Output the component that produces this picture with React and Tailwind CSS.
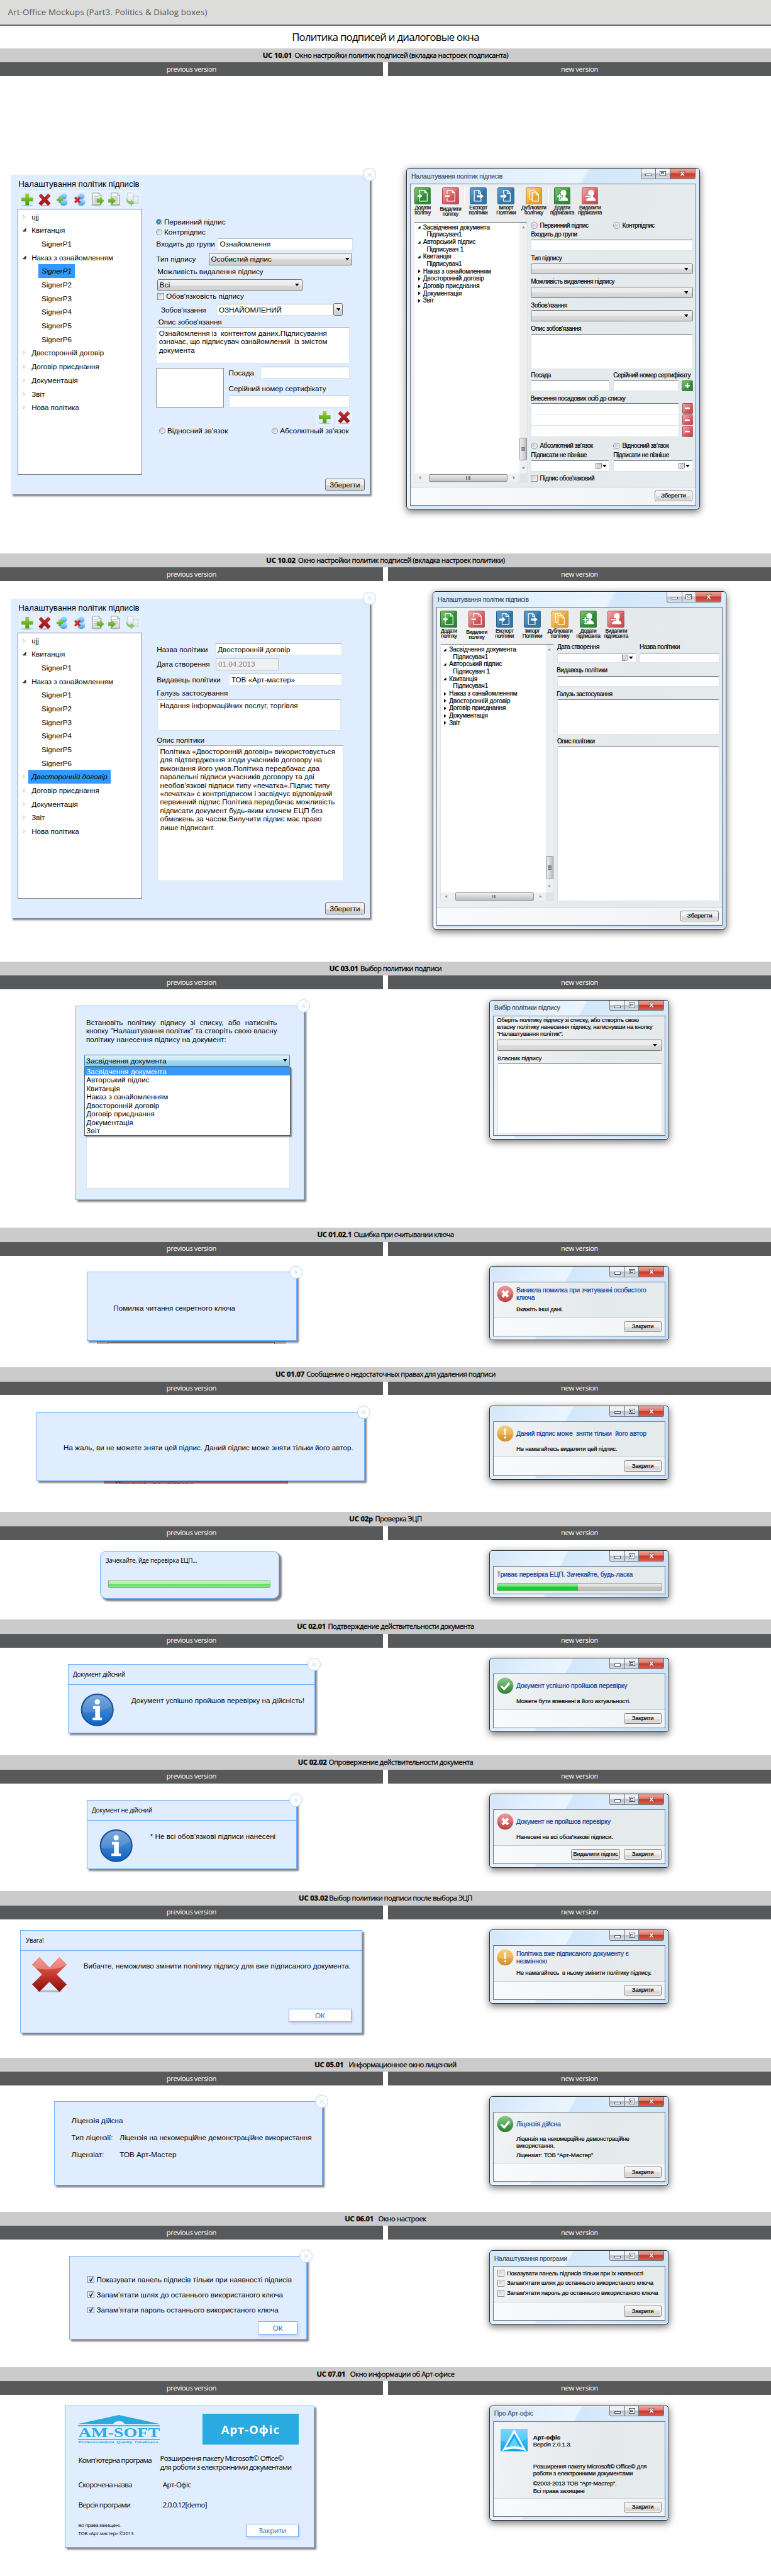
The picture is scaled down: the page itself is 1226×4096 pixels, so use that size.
import React, { useLayoutEffect, useRef, useState } from "react";

/* Single line of text whose tracking is adjusted so that it spans `w` pixels. */
function T({ w, className = "", children }) {
  const ref = useRef(null);
  const [ls, setLs] = useState(0);
  useLayoutEffect(() => {
    const el = ref.current;
    if (!w || !el) return;
    const n = el.textContent.length;
    setLs((w - el.offsetWidth) / n);
  }, [w]);
  return (
    <div className={`whitespace-pre ${className}`}>
      <span ref={ref} className="inline-block" style={{ letterSpacing: `${ls}px` }}>
        {children}
      </span>
    </div>
  );
}

const OPEN = "font-['Open_Sans','Noto_Sans',sans-serif]";

/* ---------- shared gradients ---------- */
function Defs() {
  const g = (id, a, b) => (
    <linearGradient id={id} x1="0" y1="0" x2="0" y2="1">
      <stop offset="0" stopColor={a} />
      <stop offset="1" stopColor={b} />
    </linearGradient>
  );
  return (
    <svg className="absolute h-0 w-0">
      <defs>
        {g("gGreen", "#a5d62a", "#3f9a1c")}
        {g("gRed", "#c9302c", "#8e1512")}
        {g("gBlue", "#b6e2fb", "#3f9fe6")}
        {g("gDoc", "#ffffff", "#d9dedb")}
        {g("gInfo", "#6c9fd6", "#0a62c4")}
        {g("gCross", "#ff6a5e", "#8a0b04")}
        {g("gOk", "#8cc98a", "#2c8a35")}
        {g("gErr", "#ee9a9c", "#c9444c")}
        {g("gWarn", "#f8cf7d", "#e79a2b")}
        {g("gCyan", "#4fd0fb", "#12a4ef")}
      </defs>
    </svg>
  );
}

/* ---------- previous version: toolbar icons ---------- */
const Plus = () => (
  <>
    <ellipse cx="16" cy="29" rx="13" ry="1.500" fill="#9fb3a0" opacity=".7" />
    <path d="M12.500 3h8v9h8.500v8h-8.500v8h-8v-8H4v-8h8.500z" fill="url(#gGreen)" />
  </>
);
const Cross = () => (
  <>
    <ellipse cx="16" cy="29" rx="12" ry="1.500" fill="#b3a0a8" opacity=".7" />
    <path d="M8.500 3L16 11l7.500-8 5.500 5-7.500 8 7.500 8-6 5-7-7.500L9 29l-6-5 7.500-8L3.500 8z" fill="url(#gRed)" />
  </>
);
const Person = () => (
  <>
    <path d="M12 24c0-6 4-9 9-9s6 4 6 8-4 6-8 6-7-1-7-5z" fill="url(#gBlue)" />
    <ellipse cx="13.500" cy="12" rx="5.500" ry="5" fill="url(#gBlue)" />
    <circle cx="19.500" cy="9" r="6.500" fill="url(#gBlue)" />
  </>
);
const Doc = ({ x = 7 }) => (
  <g transform={`translate(${x} 0)`}>
    <ellipse cx="8" cy="28" rx="11" ry="1.500" fill="#98a39a" opacity=".7" />
    <path d="M0 2h13l5 5v20H0z" fill="url(#gDoc)" stroke="#8d968f" strokeWidth="1.200" />
    <path d="M13 2v5h5" fill="none" stroke="#8d968f" />
    <path d="M3 9h9M3 13h12M3 17h12M3 21h8" stroke="#b9c0bb" strokeWidth="1.500" />
  </g>
);
const GArrow = ({ x }) => (
  <path transform={`translate(${x} 0)`} d="M0 15h7v-4l8 7.500-8 7.500v-4H0z" fill="url(#gGreen)" stroke="#4a8f22" strokeWidth=".6" />
);
const OLD_ICONS = [
  <Plus />,
  <Cross />,
  <>
    <Person />
    <path d="M8.500 10h4.500v4h4.500v4.500H13v4H8.500v-4H4V14h4.500z" fill="url(#gGreen)" />
  </>,
  <>
    <Person />
    <path d="M7 10l4 3.500 4-3.500 3 3-3.500 4 3.500 4-3 3-4-3.500-4 3.500-3-3 3.500-4L4 13z" fill="#e3242b" />
  </>,
  <>
    <Doc x={6} />
    <GArrow x={15} />
  </>,
  <>
    <Doc x={8} />
    <GArrow x={2} />
  </>,
  <g opacity=".65">
    <path d="M5 2h12v18H5zM17 9h11v15H17z" fill="url(#gDoc)" stroke="#a8b0aa" />
    <path d="M3 11c0 6 4 9 9 9v-4l8 7-8 7v-4C6 26 1 20 3 11z" fill="#5fa82c" />
  </g>,
];
function IconBtn({ children }) {
  return (
    <div className="h-[32px] w-[31px] rounded-[3px] border-2 border-[#f2f7ff] bg-[#e3eefe]">
      <svg viewBox="0 0 32 32" className="h-full w-full">
        {children}
      </svg>
    </div>
  );
}

/* ---------- previous version: controls ---------- */
const FIELD = "border border-[#dbe3ea] border-t-[#aeb4bb] bg-white flex items-center";
const SELECT =
  "flex items-center rounded-[3px] border border-[#707070] bg-[linear-gradient(#f2f2f2_0%,#ebebeb_50%,#dadada_51%,#cfcfcf_100%)]";
const Caret = ({ className = "" }) => (
  <svg viewBox="0 0 8 5" className={`h-[5px] w-[8px] shrink-0 ${className}`}>
    <path d="M0 0h8L4 5z" fill="#000" />
  </svg>
);
function Radio({ on, big }) {
  return (
    <span
      className={`flex shrink-0 items-center justify-center rounded-full border border-[#8e8f8f] bg-[#f4f4f4] ${
        big ? "h-[13px] w-[13px]" : "h-[12px] w-[12px]"
      }`}
    >
      <span className={`h-[8px] w-[8px] rounded-full ${on ? "bg-[radial-gradient(#5fd0f8_10%,#0c4a72_80%)]" : "bg-[linear-gradient(135deg,#b9bfc5,#f4f5f6)]"}`} />
    </span>
  );
}
function Check({ on }) {
  return (
    <span className="flex h-[13px] w-[13px] shrink-0 items-center justify-center border border-[#8e8f8f] bg-[#f4f4f4]">
      <span className="flex h-[9px] w-[9px] bg-[linear-gradient(135deg,#c6cbd0,#f6f6f6)]">
        {on && (
          <svg viewBox="0 0 9 9" className="h-full w-full">
            <path d="M1.500 4.500L4 8l3.500-7.500" fill="none" stroke="#2b2f8f" strokeWidth="1.800" />
          </svg>
        )}
      </span>
    </span>
  );
}
function CloseDot() {
  return (
    <div className="absolute -right-[12px] -top-[13px] flex h-[25px] w-[25px] items-center justify-center rounded-full border border-[#a9cffb] bg-white">
      <svg viewBox="0 0 10 10" className="h-[9px] w-[9px]">
        <path d="M1 1l8 8M9 1L1 9" stroke="#a9cffb" strokeWidth="1.300" />
      </svg>
    </div>
  );
}
function Old({ className = "", close = true, children }) {
  return (
    <div className={`relative border border-[#71b0fb] bg-[#e0edff] text-[14px] shadow-[4px_4px_3px_rgba(60,60,70,0.65)] ${className}`}>
      {children}
      {close && <CloseDot />}
    </div>
  );
}
function OldTree({ rows }) {
  return (
    <div className="h-[507px] w-[238px] border border-[#7f8794] bg-white pt-px">
      {rows.map(([kind, text, w, sel], i) => (
        <div key={i} className="flex h-[26px] items-center">
          <svg viewBox="0 0 8 10" className="ml-[9px] h-[9px] w-[7px] shrink-0">
            {kind === "c" && <path d="M1 1l5 4-5 4z" fill="#fff" stroke="#b0b3b8" strokeWidth="1" />}
            {kind === "o" && <path d="M7 1v7H0z" fill="#444" stroke="#222" strokeWidth=".8" />}
          </svg>
          <div
            className={`flex h-[26px] items-center ${kind === "s" ? "ml-[23px]" : "ml-[4px]"} ${
              sel ? "bg-[#3399ff] px-[6px] italic" : "px-[6px]"
            }`}
          >
            <T w={w}>{text}</T>
          </div>
        </div>
      ))}
    </div>
  );
}
const oldRows = (sel) => [
  ["c", "ujj", 14],
  ["o", "Квитанція", 64],
  ["s", "SignerP1", 57],
  ["o", "Наказ з ознайомленням", 156],
  ["s", "SignerP1", 57, sel === 4],
  ["s", "SignerP2", 57],
  ["s", "SignerP3", 57],
  ["s", "SignerP4", 57],
  ["s", "SignerP5", 57],
  ["s", "SignerP6", 57],
  ["c", "Двосторонній договір", sel === 10 ? 145 : 138, sel === 10],
  ["c", "Договір приєднання", 129],
  ["c", "Документація", 88],
  ["c", "Звіт", 25],
  ["c", "Нова політика", 91],
];
function OldPolicy({ sel, className, children }) {
  return (
    <div className={`relative flex h-[610px] w-[685px] bg-[#e0edff] text-[14px] shadow-[4px_4px_3px_rgba(60,60,70,0.65)] ${className}`}>
      <div className="ml-[13px] w-[238px]">
        <T w={231} className="ml-[2px] mt-[9px] h-[20px] text-[16px] leading-[20px]">
          Налаштування політик підписів
        </T>
        <div className="ml-[3px] mt-[2px] flex h-[34px] w-[232px] justify-between">
          {OLD_ICONS.map((ic, i) => (
            <IconBtn key={i}>{ic}</IconBtn>
          ))}
        </div>
        <OldTree rows={oldRows(sel)} />
      </div>
      <div className="ml-[26px] flex w-[398px] flex-col">
        {children}
        <div className={`mb-[8px] mt-auto h-[22px] w-[75px] justify-center self-end ${SELECT}`}>
          <T w={58}>Зберегти</T>
        </div>
      </div>
      <CloseDot />
    </div>
  );
}

/* ---------- new version: window frame ---------- */
function Win({ className = "", title, tw, children }) {
  return (
    <div
      className={`flex flex-col rounded-[6px] border border-[#262b30] bg-[linear-gradient(118deg,#d3e5f9_0%,#e3f1ff_22%,#eaf5ff_38%,#d2e7fb_39%,#dcedfc_60%,#c4ddf7_100%)] shadow-[0_4px_14px_rgba(0,0,0,0.55),inset_0_0_0_1px_rgba(255,255,255,0.8)] [-webkit-text-stroke:0.25px] ${className}`}
    >
      <div className="flex h-[29px] shrink-0 items-start">
        {title && (
          <T w={tw} className="ml-[8px] mt-[7px] h-[16px] text-[12.500px] leading-[16px] text-[#44525e]">
            {title}
          </T>
        )}
        <div className="ml-auto mr-[8px] flex h-[20px] overflow-hidden rounded-b-[4px] border border-t-0 border-[#6a7480]">
          <div className="flex w-[28px] items-end justify-center border-r border-[#6a7480] bg-[linear-gradient(#eef2f7_45%,#b9c1cb_50%,#d9dfe8)] pb-[4px]">
            <span className="h-[5px] w-[12px] border border-[#55606b] bg-white" />
          </div>
          <div className="flex w-[27px] items-center justify-center border-r border-[#6a7480] bg-[linear-gradient(#eef2f7_45%,#b9c1cb_50%,#d9dfe8)]">
            <span className="flex h-[10px] w-[12px] items-center justify-center border border-[#55606b] bg-white">
              <span className="h-[4px] w-[6px] border border-[#55606b]" />
            </span>
          </div>
          <div className="flex w-[47px] items-center justify-center bg-[linear-gradient(#eba89b_0%,#dd7767_45%,#c8362a_50%,#d9604e_100%)]">
            <svg viewBox="0 0 12 10" className="h-[10px] w-[12px]">
              <path d="M1 .5h3L6 3 8 .5h3L7.800 5 11 9.500H8L6 7 4 9.500H1L4.200 5z" fill="#fff" stroke="#5a3a3a" strokeWidth=".8" />
            </svg>
          </div>
        </div>
      </div>
      <div className="mx-[6px] mb-[6px] flex flex-1 flex-col border border-[#6d7680] bg-[linear-gradient(100deg,#f1f3f5_0%,#e4e9ec_60%,#e6ebed_100%)]">
        {children}
      </div>
    </div>
  );
}
const BTN =
  "flex h-[21px] items-center justify-center rounded-[3px] border border-[#7a7a7a] bg-[linear-gradient(#f4f4f4_0%,#ededed_50%,#dddddd_51%,#d4d4d4_100%)] text-[11.500px] shadow-[inset_0_0_0_1px_#fafafa]";
function Footer({ children }) {
  return (
    <div className="mt-auto flex h-[35px] shrink-0 justify-end gap-[7px] border-t border-[#c6cbd0] bg-[linear-gradient(100deg,#f9fafb,#f1f3f5)] pr-[6px] pt-[6px]">
      {children}
    </div>
  );
}
const CloseBtn = () => (
  <div className={`w-[72px] ${BTN}`}>
    <T w={42}>Закрити</T>
  </div>
);

/* ---------- new version: toolbar ---------- */
const TILE = {
  green: "bg-[linear-gradient(135deg,#7cc06f_0%,#4aa54a_45%,#2f8f38_50%,#33803a_100%)]",
  red: "bg-[linear-gradient(135deg,#eda5a6_0%,#dc6e72_50%,#d25a60_52%,#c04b52_100%)]",
  blue: "bg-[linear-gradient(135deg,#5a9fce_0%,#3c82b8_50%,#32709f_52%,#3a7aa5_100%)]",
  orange: "bg-[linear-gradient(135deg,#f7cf86_0%,#efb040_50%,#e9a32f_52%,#e09a2e_100%)]",
};
const S = { fill: "none", stroke: "#fff", strokeWidth: 1.6 };
const GLYPH = {
  add: (
    <>
      <path d="M9 11V5h11l5 5v17H9v-6M20 5v5h5" {...S} />
      <path d="M5 16.500h9M9.500 12v9" stroke="#fff" strokeWidth="3" />
    </>
  ),
  del: (
    <>
      <path d="M9 12V5h11l5 5v17H9v-6M20 5v5h5" {...S} />
      <path d="M5 16.500h9" stroke="#fff" strokeWidth="3" />
    </>
  ),
  exp: (
    <>
      <path d="M22 11l-4-6H8v22h14v-5M17 5v6h5" {...S} />
      <path d="M14 15h6v-4l7 6-7 6v-4h-6z" fill="#fff" />
    </>
  ),
  imp: (
    <>
      <path d="M11 11V5h9l5 5v17H11v-5M19 5v6h6" {...S} />
      <path d="M5 15h6v-4l7 6-7 6v-4H5z" fill="#fff" />
    </>
  ),
  dup: (
    <>
      <path d="M12 9h9l4 4v14H12zM20 9v5h5" {...S} />
      <path d="M12 23H7V5h10l3 4" {...S} />
    </>
  ),
  user: (
    <path d="M18.500 4c4 0 5.500 3 5.500 6.500s-1.500 5-2.500 6.500c0 3 6 3 6 7.500 0 1.500-1 2-2 2H10c-1.500 0-2-.5-2-2 0-3 6-4 6-7-1-1.500-2-3.500-2-7S14.500 4 18.500 4z" fill="#fff" />
  ),
};
const NEW_TOOLS = (swap) => [
  ["green", "add", ["Додати", 31], ["політку", 31]],
  ["red", "del", ["Видалити", 40], ["політку", 30]],
  ["blue", swap ? "imp" : "exp", ["Експорт", 34], ["політики", 36]],
  ["blue", swap ? "exp" : "imp", ["Імпорт", 28], ["ПолІтики", 37]],
  ["orange", "dup", ["Дублювати", 47], ["політику", 35]],
  ["green", "uadd", ["Додати", 31], ["підписанта", 46]],
  ["red", "udel", ["Видалити", 41], ["підписанта", 46]],
];
function NewToolbar({ swap, className }) {
  return (
    <div className={`-ml-[4px] flex pt-[6px] ${className}`}>
      {NEW_TOOLS(swap).map(([color, g, a, b], i) => (
        <div key={i} className={`relative flex w-[53px] flex-col items-center ${i === 5 ? "ml-px" : ""}`}>
          {!swap && (i === 2 || i === 5) && <span className="absolute left-0 top-0 h-[32px] w-px bg-white" />}
          <div className={`h-[32px] w-[32px] rounded-[3px] border border-black/20 ${TILE[color]}`}>
            <svg viewBox="0 0 32 32" className="h-full w-full">
              {g[0] === "u" ? (
                <>
                  {GLYPH.user}
                  <path
                    d={g === "uadd" ? "M8 11h4v4h4v4h-4v4H8v-4H4v-4h4z" : "M5 15h11v4H5z"}
                    fill="#fff"
                    stroke={g === "uadd" ? "#3a9a42" : "#d2595f"}
                    strokeWidth="1.300"
                  />
                </>
              ) : (
                GLYPH[g]
              )}
            </svg>
          </div>
          <div className={`flex flex-col items-center text-[10px] leading-[9.500px] ${i === 1 ? "mt-[5px]" : "mt-[3px]"}`}>
            <T w={a[1]}>{a[0]}</T>
            <T w={b[1]}>{b[0]}</T>
          </div>
        </div>
      ))}
    </div>
  );
}

const NEW_ROWS = [
  ["o", "Засвідчення документа", 127],
  ["s", "Підписувач1", 67],
  ["o", "Авторський підпис", 100],
  ["s", "Підписувач 1", 70],
  ["o", "Квитанція", 54],
  ["s", "Підписувач1", 67],
  ["c", "Наказ з ознайомленням", 130],
  ["c", "Двосторонній договір", 116],
  ["c", "Договір приєднання", 108],
  ["c", "Документація", 74],
  ["c", "Звіт", 21],
];
const Tri = ({ d }) => (
  <svg viewBox="0 0 6 6" className="h-[6px] w-[6px]">
    <path d={d} fill="#8f959b" />
  </svg>
);
function NewTree({ className }) {
  return (
    <div className={`flex w-[217px] rounded-[2px] border border-[#dfe4ea] border-t-[#7b8288] ${className}`}>
      <div className="flex flex-1 flex-col">
        <div className="flex-1 bg-white pt-[2px] text-[12px]">
          {NEW_ROWS.map(([k, t, w], i) => (
            <div key={i} className="flex h-[14px] items-center">
              <svg viewBox="0 0 7 8" className="ml-[5px] mr-[5px] h-[8px] w-[6px] shrink-0">
                {k === "o" && <path d="M6.500 1v6H0z" />}
                {k === "c" && <path d="M1.500 0l5 4-5 4z" />}
              </svg>
              <T w={w} className={`leading-[14px] ${k === "s" ? "ml-[7px]" : ""}`}>
                {t}
              </T>
            </div>
          ))}
        </div>
        <div className="flex h-[16px] items-center bg-[#eeeff1] pl-[7px] pr-[7px]">
          <Tri d="M5 0v6L1 3z" />
          <div className="ml-[14px] flex h-[15px] w-[150px] items-center justify-center gap-[1px] rounded-[2px] border border-[#8d9298] bg-[linear-gradient(#ededee,#d5d6d9_50%,#bcbdc2)]">
            <span className="h-[7px] w-[2px] bg-[#777]" />
            <span className="h-[7px] w-[2px] bg-[#777]" />
            <span className="h-[7px] w-[2px] bg-[#777]" />
          </div>
          <div className="ml-auto">
            <Tri d="M1 0v6l4-3z" />
          </div>
        </div>
      </div>
      <div className="flex w-[15px] flex-col items-center bg-[#eeeff1] pt-[6px]">
        <Tri d="M0 5h6L3 1z" />
        <div className="mt-auto flex h-[44px] w-full flex-col items-center justify-center gap-[1px] rounded-[2px] border border-[#8d9298] bg-[linear-gradient(90deg,#ededee,#d5d6d9_50%,#bcbdc2)]">
          <span className="h-[2px] w-[7px] bg-[#777]" />
          <span className="h-[2px] w-[7px] bg-[#777]" />
          <span className="h-[2px] w-[7px] bg-[#777]" />
        </div>
        <div className="mb-[8px] mt-[11px]">
          <Tri d="M0 1h6L3 5z" />
        </div>
        <div className="h-[16px] w-full bg-[#dfe3e7]" />
      </div>
    </div>
  );
}
const NF = "rounded-[2px] border border-[#d9e1ea] border-t-[#6f757b] bg-white";
const NSel = ({ className = "w-[309px]" }) => (
  <div className={`flex h-[21px] items-center justify-end rounded-[3px] border border-[#707070] bg-[linear-gradient(#f0f0f0_0%,#ebebeb_50%,#dddddd_51%,#d3d3d3_100%)] pr-[8px] ${className}`}>
    <Caret />
  </div>
);
const NL = ({ w, className = "", children }) => (
  <T w={w} className={`h-[16px] leading-[16px] ${className}`}>
    {children}
  </T>
);
const DateField = ({ className }) => (
  <div className={`flex items-center justify-end ${NF} ${className}`}>
    <svg viewBox="0 0 12 12" className="h-[12px] w-[12px]">
      <path d="M.5.5h11v8l-3 3h-8z" fill="#eef0f2" stroke="#555" />
      <path d="M2 3h8M2 5h8M2 7h8M2 9h6M4 2v8M6 2v8M8 2v8" stroke="#b8bdc2" strokeWidth=".6" />
    </svg>
    <Caret className="ml-px mr-[5px]" />
  </div>
);
const MiniBtn = ({ plus }) => (
  <div className={`flex h-[21px] w-[21px] items-center justify-center rounded-[2px] border border-black/20 ${plus ? TILE.green : TILE.red}`}>
    <svg viewBox="0 0 10 10" className="h-[10px] w-[10px]">
      <path d={plus ? "M5 0v10M0 5h10" : "M0 5h10"} stroke="#fff" strokeWidth="3" />
    </svg>
  </div>
);

/* ---------- status icons ---------- */
function Status({ kind }) {
  const fill = { ok: "url(#gOk)", err: "url(#gErr)", warn: "url(#gWarn)" }[kind];
  return (
    <svg viewBox="0 0 32 32" className="h-[32px] w-[32px] shrink-0">
      <circle cx="16" cy="16" r="15.500" fill={fill} />
      <path d="M0.500 16a15.500 15.500 0 0 0 31 0c-8 4-22 4-31 0z" fill="#000" opacity=".07" />
      {kind === "ok" && <path d="M8.500 16.500l5.500 6L24 11" fill="none" stroke="#fff" strokeWidth="4" />}
      {kind === "err" && <path d="M10.500 10.500l11 11M21.500 10.500l-11 11" stroke="#fff" strokeWidth="5" />}
      {kind === "warn" && <path d="M14 6.500h4l-.6 13h-2.800zM14 22h4v3.500h-4z" fill="#fff" />}
    </svg>
  );
}
function Msg({ kind, lines, body, className = "h-[141px]", buttons }) {
  return (
    <Win className={`w-[343px] ${className}`}>
      <div className="flex px-[6px] pt-[6px]">
        <Status kind={kind} />
        <div className="ml-[5px]">
          <div className="flex h-[33px] flex-col justify-center text-[12.500px] leading-[14px] text-[#0a3a9c]">
            {lines.map(([t, w]) => (
              <T key={t} w={w}>
                {t}
              </T>
            ))}
          </div>
          <div className="mt-[6px] text-[11.500px] leading-[13px]">
            {body.map(([t, w, c]) => (
              <T key={t} w={w} className={c || ""}>
                {t}
              </T>
            ))}
          </div>
        </div>
      </div>
      <Footer>{buttons || <CloseBtn />}</Footer>
    </Win>
  );
}
const Info = () => (
  <svg viewBox="0 0 64 64" className="h-[64px] w-[64px] shrink-0">
    <circle cx="32" cy="32" r="30" fill="url(#gInfo)" stroke="#1b4f96" strokeWidth="2.500" />
    <path d="M4 36C12 38 40 38 59 24 54 0 10-4 4 30z" fill="#fff" opacity=".12" />
    <circle cx="32" cy="17" r="5" fill="#fff" />
    <path d="M24 25h13v22h4v5H23v-5h5V30h-4z" fill="#fff" />
  </svg>
);
const OkBtn = ({ className, w, children }) => (
  <div className={`flex items-center justify-center border-2 border-[#71aefc] bg-white text-[14px] text-[#2f6fae] shadow-[2px_3px_5px_rgba(110,140,180,0.35)] ${className}`}>
    <T w={w}>{children}</T>
  </div>
);

/* ---------- section scaffold ---------- */
function Section({ code, cw, name, nw, gap = "gap-[4px]", className, prev, next }) {
  return (
    <section className={className}>
      <div className={`flex h-[27px] items-center justify-center bg-[#cbcbcb] text-[13.500px] [-webkit-text-stroke:0.3px] ${gap} ${OPEN}`}>
        <T w={cw} className="font-bold">
          {code}
        </T>
        <T w={nw}>{name}</T>
      </div>
      <div className={`flex h-[26px] gap-[10px] text-[13.500px] text-white ${OPEN}`}>
        <div className="flex flex-1 items-center justify-center bg-[#58595b]">
          <T w={95}>previous version</T>
        </div>
        <div className="flex flex-1 items-center justify-center bg-[#58595b]">
          <T w={71}>new version</T>
        </div>
      </div>
      <div className="flex">
        <div className="flex w-[735px] flex-col items-start">{prev}</div>
        <div className="flex w-[735px] flex-col items-start">{next}</div>
      </div>
    </section>
  );
}

/* ---------- dialogs ---------- */
function OldSigner() {
  return (
    <OldPolicy sel={4} className="ml-[20px] mt-[188px]">
      <div className="mt-[80px] flex h-[20px] items-center gap-[4px]">
        <Radio on />
        <T w={117}>Первинний підпис</T>
      </div>
      <div className="flex h-[18px] items-center gap-[4px]">
        <Radio />
        <T w={79}>Контрпідпис</T>
      </div>
      <div className="mt-[3px] flex h-[23px] items-center">
        <T w={112} className="ml-px w-[116px]">
          Входить до групи
        </T>
        <div className={`h-[23px] w-[259px] pl-[4px] ${FIELD}`}>
          <T w={97}>Ознайомлення</T>
        </div>
      </div>
      <div className="mt-[6px] flex h-[22px] items-center">
        <T w={75} className="ml-px w-[100px]">
          Тип підпису
        </T>
        <div className={`h-[23px] w-[274px] justify-between pl-[3px] pr-[5px] ${SELECT}`}>
          <T w={116}>Особистий підпис</T>
          <Caret />
        </div>
      </div>
      <T w={202} className="ml-[3px] mt-[4px] h-[20px] leading-[20px]">
        Можливість видалення підпису
      </T>
      <div className={`ml-[3px] mt-[3px] h-[23px] w-[277px] justify-between pl-[3px] pr-[5px] ${SELECT}`}>
        <T w={20}>Всі</T>
        <Caret />
      </div>
      <div className="ml-[3px] mt-[2px] flex h-[16px] items-center gap-[4px]">
        <Check />
        <T w={148}>Обов'язковість підпису</T>
      </div>
      <div className="mt-[6px] flex h-[23px] items-center">
        <T w={86} className="ml-[10px] w-[105px]">
          Зобов'язання
        </T>
        <div className={`h-[23px] w-[224px] pl-[4px] ${FIELD}`}>
          <T w={120}>ОЗНАЙОМЛЕНИЙ</T>
        </div>
        <div className={`h-[24px] w-[18px] justify-center ${SELECT}`}>
          <Caret />
        </div>
      </div>
      <T w={121} className="ml-[5px] mt-[4px] h-[16px] leading-[16px]">
        Опис зобов'язання
      </T>
      <div className="ml-px mt-[2px] h-[69px] w-[369px] border border-[#dbe3ea] border-t-[#aeb4bb] bg-white pl-[4px] pt-[2px] leading-[16px]">
        <T w={320}>Ознайомлення із  контентом даних.Підписування</T>
        <T w={321}>означає, що підписувач ознайомлений  із змістом</T>
        <T w={68}>документа</T>
      </div>
      <div className="mt-[6px] flex h-[78px] items-end">
        <div className="h-[75px] w-[130px] border border-[#8d909a] bg-white" />
        <div className="ml-[9px] h-[78px]">
          <div className="flex items-center">
            <T w={49} className="w-[61px]">
              Посада
            </T>
            <div className={`h-[23px] w-[170px] ${FIELD}`} />
          </div>
          <T w={186} className="mt-[11px] h-[16px] leading-[16px]">
            Серійний номер сертифікату
          </T>
          <div className={`ml-px mt-[5px] h-[23px] w-[230px] ${FIELD}`} />
        </div>
      </div>
      <div className="ml-[306px] mt-[3px] flex h-[31px] gap-[6px]">
        <IconBtn>
          <Plus />
        </IconBtn>
        <IconBtn>
          <Cross />
        </IconBtn>
      </div>
      <div className="ml-[6px] mt-[2px] flex h-[16px] items-center gap-[4px]">
        <Radio />
        <T w={115} className="w-[195px]">
          Відносний зв'язок
        </T>
        <Radio />
        <T w={131}>Абсолютный зв'язок</T>
      </div>
    </OldPolicy>
  );
}
const POLICY_TEXT = [
  ["Політика «Двосторонній договір» використовується", 334],
  ["для підтвердження згоди учасників договору на", 309],
  ["виконання його умов.Політика передбачає два", 304],
  ["паралельні підписи учасників договору та дві", 294],
  ["необов’язкові підписи типу «печатка».Підпис типу", 324],
  ["«печатка» є контрпідписом і засвідчує відповідний", 328],
  ["первинний підпис.Політика передбачає можливість", 333],
  ["підписати документ будь-яким ключем ЕЦП без", 310],
  ["обмежень за часом.Вилучити підпис має право", 308],
  ["лише підписант.", 104],
];
function OldPolicyForm() {
  return (
    <OldPolicy sel={10} className="ml-[20px] mt-[33px]">
      <div className="ml-[2px] mt-[86px] flex h-[23px] items-center">
        <T w={97} className="w-[111px]">
          Назва політики
        </T>
        <div className={`h-[23px] w-[242px] pl-[4px] ${FIELD}`}>
          <T w={138}>Двосторонній договір</T>
        </div>
      </div>
      <div className="ml-[2px] mt-[5px] flex h-[23px] items-center">
        <T w={101} className="w-[112px]">
          Дата створення
        </T>
        <div className="flex h-[23px] w-[120px] items-center border border-[#b9bdc1] bg-[#f0f0f0] pl-[4px] text-[#808080]">
          <T w={70}>01.04.2013</T>
        </div>
      </div>
      <div className="ml-[2px] mt-[6px] flex h-[23px] items-center">
        <T w={122} className="w-[137px]">
          Видавець політики
        </T>
        <div className={`h-[23px] w-[216px] pl-[4px] ${FIELD}`}>
          <T w={122}>ТОВ «Арт-мастер»</T>
        </div>
      </div>
      <T w={135} className="ml-[2px] mt-[5px] h-[18px] leading-[18px]">
        Галузь застосування
      </T>
      <div className="ml-[3px] mt-[4px] h-[60px] w-[350px] border border-[#dbe3ea] border-t-[#aeb4bb] bg-white pl-[4px] pt-[2px] leading-[17px]">
        <T w={263}>Надання інформаційних послуг, торгівля</T>
      </div>
      <T w={91} className="ml-[2px] mt-[8px] h-[18px] leading-[18px]">
        Опис політики
      </T>
      <div className="ml-[3px] mt-[1px] h-[259px] w-[355px] border border-[#dbe3ea] border-t-[#aeb4bb] bg-white pl-[4px] pt-[2px] leading-[16.150px]">
        {POLICY_TEXT.map(([t, w]) => (
          <T key={t} w={w}>
            {t}
          </T>
        ))}
      </div>
    </OldPolicy>
  );
}
const SaveFooter = () => (
  <Footer>
    <div className={`w-[73px] ${BTN}`}>
      <T w={47}>Зберегти</T>
    </div>
  </Footer>
);
function NewSigner() {
  return (
    <Win className="ml-[40px] mt-[175px] h-[651px] w-[560px]" title="Налаштування політик підписів" tw={174}>
      <NewToolbar className="h-[72px]" />
      <div className="flex h-[497px] pl-[6px] text-[12px]">
        <NewTree className="h-[497px]" />
        <div className="ml-[6px] w-[309px]">
          <div className="flex h-[14px] items-center gap-[4px]">
            <Radio big />
            <T w={92} className="w-[136px]">
              Первинний підпис
            </T>
            <Radio big />
            <T w={62}>Контрпідпис</T>
          </div>
          <NL w={88} className="mt-[2px]">
            Входить до групи
          </NL>
          <div className={`mt-[2px] h-[21px] ${NF}`} />
          <NL w={59} className="mb-[2px] mt-[6px]">
            Тип підпису
          </NL>
          <NSel />
          <NL w={159} className="mb-[2px] mt-[6px]">
            Можливість видалення підпису
          </NL>
          <NSel />
          <NL w={69} className="mb-[1px] mt-[6px]">
            Зобов’язання
          </NL>
          <NSel />
          <NL w={96} className="mt-[7px]">
            Опис зобов’язання
          </NL>
          <div className={`mt-[2px] h-[67px] ${NF}`} />
          <div className="mt-[3px] flex">
            <NL w={38} className="w-[157px]">
              Посада
            </NL>
            <NL w={147}>Серійний номер сертифікату</NL>
          </div>
          <div className="mt-[2px] flex">
            <div className={`h-[21px] w-[150px] ${NF}`} />
            <div className={`ml-[7px] mr-[6px] h-[21px] w-[125px] ${NF}`} />
            <MiniBtn plus />
          </div>
          <NL w={181} className="-ml-px mt-[6px]">
            Внесення посадових осіб до списку
          </NL>
          <div className="flex h-[65px] justify-between">
            <div className={`flex h-[65px] w-[282px] flex-col divide-y divide-[#dde4ea] ${NF}`}>
              <div className="flex-1" />
              <div className="flex-1" />
              <div className="flex-1" />
            </div>
            <div className="flex flex-col justify-between">
              <MiniBtn />
              <MiniBtn />
              <MiniBtn />
            </div>
          </div>
          <div className="mt-[9px] flex h-[16px] items-center gap-[4px]">
            <Radio big />
            <T w={101} className="w-[136px]">
              Абсолютний зв’язок
            </T>
            <Radio big />
            <T w={89}>Відносний зв’язок</T>
          </div>
          <div className="mt-[2px] flex">
            <NL w={106} className="w-[157px]">
              Підписати не пізніше
            </NL>
            <NL w={106}>Підписати не пізніше</NL>
          </div>
          <div className="mt-[2px] flex justify-between">
            <DateField className="h-[21px] w-[150px]" />
            <DateField className="h-[21px] w-[152px]" />
          </div>
          <div className="mt-[5px] flex h-[16px] items-center gap-[4px]">
            <Check />
            <T w={104}>Підпис обов’язковий</T>
          </div>
        </div>
      </div>
      <SaveFooter />
    </Win>
  );
}
function NewPolicyForm() {
  return (
    <Win className="ml-[90px] mt-[19px] h-[645px] w-[560px]" title="Налаштування політик підписів" tw={174}>
      <NewToolbar swap className="h-[70px]" />
      <div className="flex h-[490px] pl-[6px] text-[12px]">
        <NewTree className="h-[490px]" />
        <div className="ml-[6px] w-[309px]">
          <div className="-mt-[3px] flex">
            <NL w={80} className="w-[157px]">
              Дата створення
            </NL>
            <NL w={77}>Назва політики</NL>
          </div>
          <div className="mt-[3px] flex justify-between">
            <DateField className="h-[20px] w-[151px]" />
            <div className={`h-[20px] w-[152px] ${NF}`} />
          </div>
          <NL w={96} className="-ml-px mt-[6px]">
            Видавець політики
          </NL>
          <div className={`mt-[3px] h-[20px] ${NF}`} />
          <NL w={106} className="-ml-px mt-[6px]">
            Галузь застосування
          </NL>
          <div className={`mt-[2px] h-[67px] ${NF}`} />
          <NL w={72} className="mt-[5px]">
            Опис політики
          </NL>
          <div className={`mt-[2px] h-[295px] ${NF}`} />
        </div>
      </div>
      <SaveFooter />
    </Win>
  );
}
const OPTIONS = [
  ["Засвідчення документа", 153],
  ["Авторський підпис", 120],
  ["Квитанція", 64],
  ["Наказ з ознайомленням", 156],
  ["Двосторонній договір", 139],
  ["Договір приєднання", 130],
  ["Документація", 89],
  ["Звіт", 26],
];
function OldChoose() {
  return (
    <Old className="ml-[144px] mt-[31px] h-[371px] w-[436px]">
      <div className="ml-[19px] mt-[23px] leading-[16px]">
        <div className="flex w-[364px] justify-between">
          {["Встановіть", "політику", "підпису", "зі", "списку,", "або", "натисніть"].map((t) => (
            <span key={t}>{t}</span>
          ))}
        </div>
        <T w={364}>кнопку "Налаштування політик" та створіть свою власну</T>
        <T w={267}>політику нанесення підпису на документ:</T>
      </div>
      <div className="ml-[15px] mt-[22px] flex h-[22px] w-[393px] items-center justify-between rounded-[2px] border border-[#3c7fb1] bg-[linear-gradient(#dff2fc_0%,#c9e9f8_45%,#a9d9f0_50%,#8cc9e6_100%)] pl-[3px] pr-[5px]">
        <T w={153}>Засвідчення документа</T>
        <Caret />
      </div>
      <div className="ml-[19px] h-[233px] w-[389px] border border-[#dbe3ea] bg-white">
        <div className="-ml-[5px] -mt-px h-[132px] w-[393px] border border-[#555b63] bg-white shadow-[2px_2px_2px_rgba(60,60,70,0.6)]">
          {OPTIONS.map(([t, w], i) => (
            <T key={t} w={w} className={`h-[16.200px] pl-[3px] leading-[16.200px] ${i === 0 ? "bg-[#3399ff] text-white" : ""}`}>
              {t}
            </T>
          ))}
        </div>
      </div>
    </Old>
  );
}
function NewChoose() {
  return (
    <Win className="ml-[198px] mt-[20px] h-[267px] w-[343px]" title="Вибір політики підпису" tw={126}>
      <div className="pl-[6px] pt-[2px] text-[11.500px] leading-[13px]">
        <T w={271}>Оберіть політику підпису зі списку, або створіть свою</T>
        <T w={297}>власну політику нанесення підпису, натиснувши на кнопку</T>
        <T w={126}>“Налаштування політик”:</T>
        <NSel className="mt-[4px] w-[315px]" />
        <NL w={84} className="ml-px mt-[6px]">
          Власник підпису
        </NL>
        <div className={`ml-px mt-[2px] h-[133px] w-[314px] ${NF}`} />
      </div>
    </Win>
  );
}
function OldInfo({ className, title, tw, text, w, pad = "" }) {
  return (
    <Old className={`h-[132px] ${className}`}>
      <div className={`flex h-[38px] items-center border-b border-[#71b0fb] pl-[9px] text-[12px] ${OPEN}`}>
        <T w={tw}>{title}</T>
      </div>
      <div className="flex pl-[23px] pt-[16px]">
        <Info />
        <T w={w} className={`mt-[5px] h-[20px] leading-[20px] ${pad}`}>
          {text}
        </T>
      </div>
    </Old>
  );
}
const AmSoft = () => (
  <svg viewBox="0 0 156 55" className="h-[55px] w-[156px]" fill="#29abe2">
    <path d="M0 17L78 0l78 17H89c-3-7-18-7-22 0z" />
    <path d="M0 19.500h156v2H0zM0 45.500h156v2H0z" />
    <text x="1" y="42" fontSize="24" fontWeight="bold" fontFamily="Liberation Serif, serif" textLength="155" lengthAdjust="spacingAndGlyphs">
      AM-SOFT
    </text>
    <text x="1" y="53.500" fontSize="6" fontWeight="bold" fontFamily="Liberation Sans, sans-serif" textLength="154" lengthAdjust="spacingAndGlyphs">
      Professionalism. Quality. Timeliness.
    </text>
  </svg>
);
const ArtLogo = () => (
  <svg viewBox="0 0 52 46" className="h-[46px] w-[52px] shrink-0">
    <path d="M0 0h52v43H0z" fill="url(#gCyan)" />
    <path d="M0 22C16 30 36 30 52 16V0H0z" fill="#fff" opacity=".2" />
    <path d="M26 1L50 44C40 36 12 36 2 44z" fill="#fff" />
    <path d="M26 8l16 28c-8-4-24-4-32 0z" fill="#18a9f0" />
    <path d="M26 16l10 18c-5-2-15-2-20 0z" fill="#5ed2fb" />
  </svg>
);

export default function App() {
  return (
    <div className="relative h-[4911px] w-[1470px] overflow-hidden bg-white font-['Liberation_Sans',Arial,sans-serif] text-black [zoom:0.834]">
      <Defs />
      <header className={`flex h-[49px] items-center border-b-[3px] border-[#6a6b6e] bg-[#dcddda] pl-[15px] text-[16px] text-[#525252] ${OPEN}`}>
        <T w={380}>Art-Office Mockups (Part3. Politics & Dialog boxes)</T>
      </header>
      <h1 className={`flex h-[43px] items-center justify-center text-[20px] ${OPEN}`}>
        <T w={357}>Политика подписей и диалоговые окна</T>
      </h1>

      <Section
        className="h-[963px]"
        code="UC 10.01"
        cw={56}
        name="Окно настройки политик подписей (вкладка настроек подписанта)"
        nw={407}
        gap="gap-[5px]"
        prev={<OldSigner />}
        next={<NewSigner />}
      />
      <Section
        className="h-[778px]"
        code="UC 10.02"
        cw={56}
        name="Окно настройки политик подписей (вкладка настроек политики)"
        nw={394}
        gap="gap-[5px]"
        prev={<OldPolicyForm />}
        next={<NewPolicyForm />}
      />
      <Section className="h-[508px]" code="UC 03.01" cw={55} name="Выбор политики подписи" nw={155} prev={<OldChoose />} next={<NewChoose />} />
      <Section
        className="h-[266px]"
        code="UC 01.02.1"
        cw={66}
        name="Ошибка при считывании ключа"
        nw={191}
        prev={
          <>
            <Old className="z-10 ml-[165px] mt-[31px] h-[132px] w-[401px]">
              <T w={232} className="ml-[50px] mt-[58px] h-[20px] leading-[20px]">
                Помилка читання секретного ключа
              </T>
            </Old>
            <div className="ml-[185px] flex h-[5px] w-[359px] justify-center border-x border-[#71b0fb] bg-[#c3ccda]">
              <div className="mt-[2px] h-[3px] w-[320px] border border-b-0 border-[#777e88] bg-[#d9dde3]" />
            </div>
          </>
        }
        next={
          <div className="ml-[198px] mt-[20px]">
            <Msg
              kind="err"
              lines={[
                ["Виникла помилка при зчитуванні особистого", 248],
                ["ключа", 35],
              ]}
              body={[["Вкажіть інші дані.", 89]]}
            />
          </div>
        }
      />
      <Section
        className="h-[276px]"
        code="UC 01.07"
        cw={55}
        name="Сообщение о недостаточных правах для удаления подписи"
        nw={361}
        prev={
          <>
            <Old className="z-10 ml-[70px] mt-[32px] h-[132px] w-[625px]">
              <T w={552} className="ml-[50px] mt-[58px] h-[20px] leading-[20px]">
                На жаль, ви не можете зняти цей підпис. Даний підпис може зняти тільки його автор.
              </T>
            </Old>
            <div className="ml-[198px] h-[5px] w-[351px] overflow-hidden border-l border-r-2 border-[#3f7fb8] bg-[#c98086] pl-[21px]">
              <T w={149} className="text-[14px] leading-[11px]">
                Позначка часу підпису:
              </T>
            </div>
          </>
        }
        next={
          <div className="ml-[198px] mt-[20px]">
            <Msg kind="warn" lines={[["Даний підпис може  зняти тільки  його автор", 248]]} body={[["Не намагайтесь видалити цей підпис.", 192]]} />
          </div>
        }
      />
      <Section
        className="h-[205px]"
        code="UC 02p"
        cw={45}
        name="Проверка ЭЦП"
        nw={89}
        prev={
          <Old close={false} className="ml-[191px] mt-[21px] h-[91px] w-[341px] rounded-[12px]">
            <T w={174} className={`ml-[9px] mt-[10px] h-[16px] text-[12px] leading-[16px] ${OPEN}`}>
              Зачекайте, йде перевірка ЕЦП...
            </T>
            <div className="ml-[14px] mt-[28px] h-[15px] w-[310px] rounded-[2px] border border-[#8aa08c] bg-[linear-gradient(#c6f7c6_0%,#a9f0a9_50%,#5fdd62_55%,#86ef86_100%)]" />
          </Old>
        }
        next={
          <Win className="ml-[198px] mt-[20px] h-[91px] w-[343px]">
            <T w={259} className="ml-[6px] mt-[7px] h-[16px] text-[12.500px] leading-[16px] text-[#0a3a9c]">
              Триває перевірка ЕЦП. Зачекайте, будь-ласка
            </T>
            <div className="ml-[6px] mt-[8px] flex h-[15px] w-[315px] rounded-[2px] border border-[#9a9fa3] bg-[linear-gradient(#e9e9e9_0%,#dcdcdc_45%,#bdbdbd_50%,#c6c6c6_100%)]">
              <div className="w-[153px] bg-[linear-gradient(#a6eeb0_0%,#5fdc70_45%,#0ccf28_50%,#12d430_100%)]" />
            </div>
          </Win>
        }
      />
      <Section
        className="h-[259px]"
        code="UC 02.01"
        cw={55}
        name="Подтверждение действительности документа"
        nw={279}
        prev={
          <OldInfo
            className="ml-[129px] mt-[32px] w-[472px]"
            title="Документ дійсний"
            tw={100}
            text="Документ успішно пройшов перевірку на дійсність!"
            w={330}
            pad="ml-[33px]"
          />
        }
        next={
          <div className="ml-[198px] mt-[20px]">
            <Msg kind="ok" lines={[["Документ успішно пройшов перевірку", 211]]} body={[["Можете бути впевнені в його актуальності.", 218]]} />
          </div>
        }
      />
      <Section
        className="h-[259px]"
        code="UC 02.02"
        cw={55}
        name="Опровержение действительности документа"
        nw={275}
        prev={
          <OldInfo
            className="ml-[165px] mt-[32px] w-[401px]"
            title="Документ не дійсний"
            tw={115}
            text="* Не всі обов’язкові підписи нанесені"
            w={239}
            pad="ml-[33px]"
          />
        }
        next={
          <div className="ml-[198px] mt-[20px]">
            <Msg
              kind="err"
              lines={[["Документ не пройшов перевірку", 180]]}
              body={[["Нанесені не всі обов’язкові підписи.", 184]]}
              buttons={
                <>
                  <div className={`w-[94px] ${BTN}`}>
                    <T w={86}>Видалити підпис</T>
                  </div>
                  <CloseBtn />
                </>
              }
            />
          </div>
        }
      />
      <Section
        className="h-[317px]"
        code="UC 03.02"
        cw={56}
        name="Выбор политики подписи после выбора ЭЦП"
        nw={273}
        gap="gap-[2px]"
        prev={
          <Old close={false} className="ml-[38px] mt-[21px] h-[197px] w-[653px]">
            <div className={`flex h-[38px] items-center border-b border-[#71b0fb] pl-[10px] text-[12px] ${OPEN}`}>
              <T w={34}>Увага!</T>
            </div>
            <div className="flex pl-[22px] pt-[12px]">
              <svg viewBox="0 0 66 68" className="h-[68px] w-[66px]">
                <ellipse cx="33" cy="65" rx="24" ry="2" fill="#8b96a8" opacity=".6" />
                <path d="M14 0l19 20L52 0l14 14-19 19 19 19-14 14-19-19-19 19L0 52l19-19L0 14z" fill="url(#gCross)" />
                <path d="M14 1l19 20L52 1l13 13C52 26 14 24 7 21L1 14z" fill="#fff" opacity=".3" />
              </svg>
              <T w={510} className="ml-[32px] mt-[8px] h-[20px] leading-[20px]">
                Вибачте, неможливо змінити політику підпису для вже підписаного документа.
              </T>
            </div>
            <OkBtn className="ml-[511px] mt-[31px] h-[25px] w-[120px]" w={19}>
              ОК
            </OkBtn>
          </Old>
        }
        next={
          <div className="ml-[198px] mt-[20px]">
            <Msg
              kind="warn"
              lines={[
                ["Політика вже підписаного документу є", 214],
                ["незмінною", 59],
              ]}
              body={[["Не намагайтесь  в ньому змінити політику підпису.", 258]]}
            />
          </div>
        }
      />
      <Section
        className="h-[294px]"
        code="UC 05.01"
        cw={55}
        name="Информационное окно лицензий"
        nw={205}
        gap="gap-[10px]"
        prev={
          <Old className="ml-[103px] mt-[30px] h-[161px] w-[512px]">
            <T w={98} className="ml-[32px] mt-[27px] h-[20px] leading-[20px]">
              Ліцензія дійсна
            </T>
            <div className="ml-[32px] mt-[11px] flex h-[20px] items-center">
              <T w={79} className="w-[92px]">
                Тип ліцензії:
              </T>
              <T w={366}>Ліцензія на некомерційне демонстраційне використання</T>
            </div>
            <div className="ml-[32px] mt-[13px] flex h-[20px] items-center">
              <T w={62} className="w-[92px]">
                Ліцензіат:
              </T>
              <T w={108}>ТОВ Арт-Мастер</T>
            </div>
          </Old>
        }
        next={
          <div className="ml-[198px] mt-[20px]">
            <Msg
              kind="ok"
              className="h-[171px]"
              lines={[["Ліцензія дійсна", 85]]}
              body={[
                ["Ліцензія на некомерційне демонстраційне", 216],
                ["використання.", 73],
                ["Ліцензіат: ТОВ “Арт-Мастер”", 146, "mt-[5px]"],
              ]}
            />
          </div>
        }
      />
      <Section
        className="h-[296px]"
        code="UC 06.01"
        cw={55}
        name="Окно настроек"
        nw={91}
        gap="gap-[9px]"
        prev={
          <Old className="ml-[132px] mt-[31px] h-[160px] w-[453px]">
            <div className="ml-[34px] mt-[34px] flex flex-col gap-[9px]">
              {[
                ["Показувати панель підписів тільки при наявності підписів", 372],
                ["Запам’ятати шлях до останнього використаного ключа", 355],
                ["Запам’ятати пароль останнього використаного ключа", 347],
              ].map(([t, w]) => (
                <div key={t} className="flex h-[20px] items-center gap-[4px]">
                  <Check on />
                  <T w={w}>{t}</T>
                </div>
              ))}
            </div>
            <OkBtn className="ml-[359px] mt-[12px] h-[25px] w-[75px]" w={19}>
              ОК
            </OkBtn>
          </Old>
        }
        next={
          <Win className="ml-[198px] mt-[20px] h-[142px] w-[343px]" title="Налаштування програми" tw={139}>
            <div className="flex flex-col gap-[3px] pl-[7px] pt-[5px] text-[11.500px]">
              {[
                ["Показувати панель підписів тільки при їх наявності", 260],
                ["Запам’ятати шлях до останнього використаного ключа", 279],
                ["Запам’ятати пароль до останнього використаного ключа", 288],
              ].map(([t, w]) => (
                <div key={t} className="flex h-[16px] items-center gap-[5px]">
                  <Check />
                  <T w={w}>{t}</T>
                </div>
              ))}
            </div>
            <Footer>
              <CloseBtn />
            </Footer>
          </Win>
        }
      />
      <Section
        className="h-[398px]"
        code="UC 07.01"
        cw={55}
        name="Окно информации об Арт-офисе"
        nw={199}
        gap="gap-[9px]"
        prev={
          <Old close={false} className="ml-[124px] mt-[20px] flex h-[271px] w-[476px] flex-col pl-[24px] text-[12.500px]">
            <div className={`mt-[15px] flex h-[59px] ${OPEN}`}>
              <div className="mt-[2px]">
                <AmSoft />
              </div>
              <div className="ml-[81px] flex h-[58px] w-[183px] items-center justify-center bg-[#29abe2] text-[22px] font-bold text-white">
                <T w={112}>Арт-Офіс</T>
              </div>
            </div>
            <div className={`mt-[17px] flex h-[34px] leading-[17px] ${OPEN}`}>
              <T w={140} className="mt-[4px] w-[156px]">
                Комп'ютерна програма
              </T>
              <div>
                <T w={235}>Розширення пакету Microsoft© Office©</T>
                <T w={250}>для роботи з електронними документами</T>
              </div>
            </div>
            <div className={`mt-[15px] flex h-[20px] items-center ${OPEN}`}>
              <T w={102} className="w-[161px]">
                Скорочена назва
              </T>
              <T w={54}>Арт-Офіс</T>
            </div>
            <div className={`mt-[18px] flex h-[20px] items-center ${OPEN}`}>
              <T w={99} className="w-[161px]">
                Версія програми
              </T>
              <T w={84}>2.0.0.12[demo]</T>
            </div>
            <div className={`mt-[22px] flex h-[30px] items-start ${OPEN}`}>
              <div className="w-[320px] text-[9.500px] leading-[15px]">
                <T w={80}>Всі права захищені.</T>
                <T w={105}>ТОВ «Арт-мастер» ©2013</T>
              </div>
              <OkBtn className="mt-[5px] h-[25px] w-[100px]" w={52}>
                Закрити
              </OkBtn>
            </div>
          </Old>
        }
        next={
          <Win className="ml-[198px] mt-[20px] h-[220px] w-[343px]" title="Про Арт-офіс" tw={74}>
            <div className="flex pl-[13px] pt-[13px]">
              <ArtLogo />
              <div className="ml-[10px] mt-[10px] text-[11.500px] leading-[13.500px]">
                <T w={52} className="font-bold">
                  Арт-офіс
                </T>
                <T w={73}>Версія 2.0.1.3.</T>
                <T w={217} className="mt-[28px]">
                  Розширення пакету Microsoft© Office© для
                </T>
                <T w={190}>роботи з електронними документами</T>
                <T w={159} className="mt-[6px]">
                  ©2003-2013 ТОВ “Арт-Мастер”.
                </T>
                <T w={98}>Всі права захищені</T>
              </div>
            </div>
            <Footer>
              <CloseBtn />
            </Footer>
          </Win>
        }
      />
    </div>
  );
}
